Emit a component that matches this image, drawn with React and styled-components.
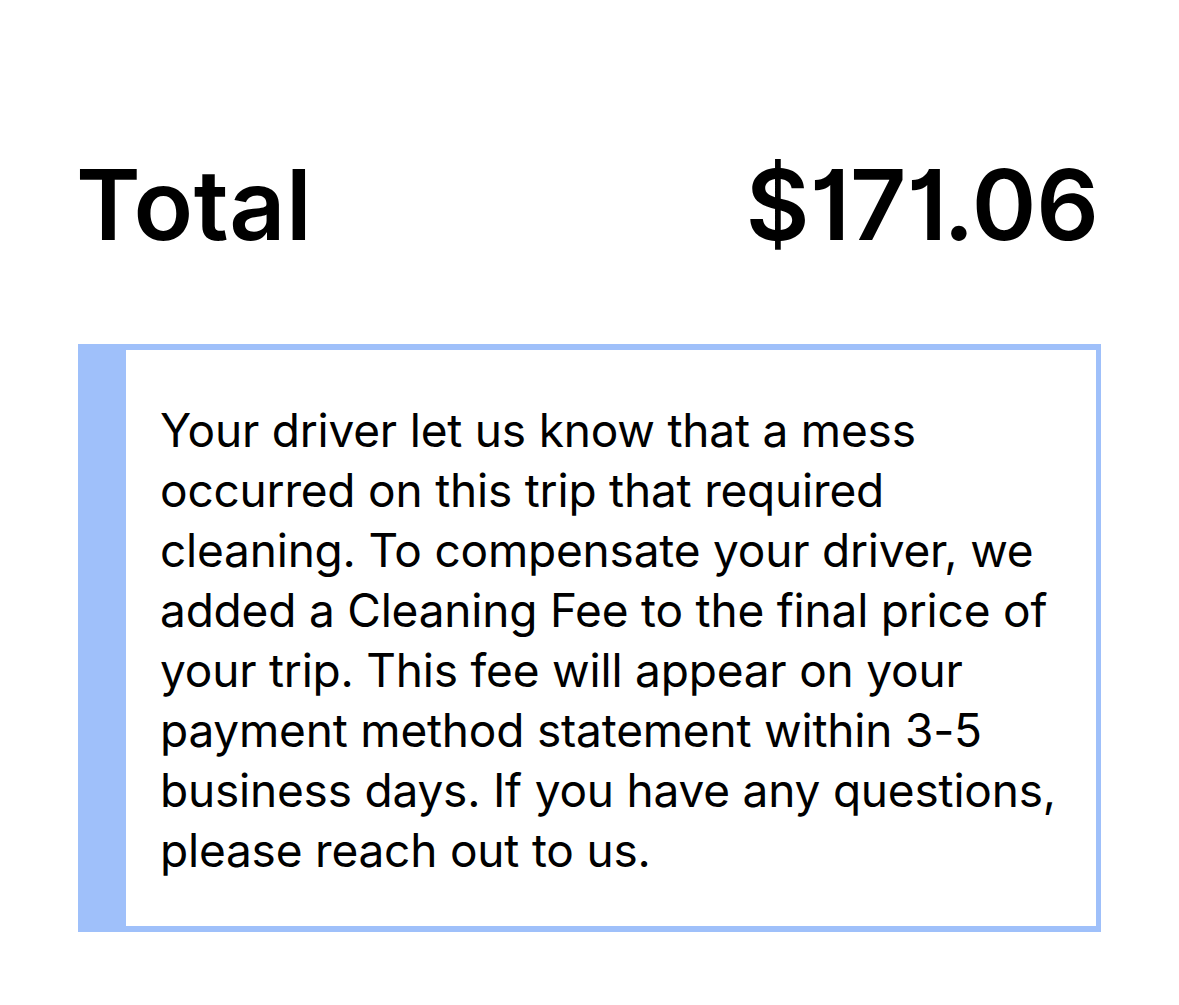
import React from 'react';
import styled, { createGlobalStyle } from 'styled-components';

const GlobalStyle = createGlobalStyle`
  html, body {
    margin: 0;
    padding: 0;
    background: #ffffff;
  }
  body {
    font-family: Inter, "Noto Sans", sans-serif;
    color: #000;
  }
`;

const Page = styled.div`
  width: 1179px;
  height: 1005px;
  box-sizing: border-box;
  padding: 148px 78px 0;
  display: flex;
  flex-direction: column;
  gap: 82px;
`;

const TotalRow = styled.div`
  display: flex;
  justify-content: space-between;
  align-items: baseline;
  padding: 0 2px 0 0;
  font-size: 98px;
  font-weight: 600;
  line-height: 114px;
  font-feature-settings: "cv01";
`;

const Label = styled.span`
  margin-left: -2px;
  letter-spacing: 0.5px;
`;

const Amount = styled.span`
  letter-spacing: 0;
`;

const Notice = styled.div`
  display: flex;
  border: 5px solid #9fc0fa;
  border-top-width: 6px;
  border-bottom-width: 6px;
  height: 588px;
  box-sizing: border-box;
`;

const Accent = styled.div`
  width: 43px;
  flex-shrink: 0;
  background: #9fc0fa;
`;

const Message = styled.p`
  margin: 0;
  padding: 50px 8px 0 34px;
  font-size: 46px;
  line-height: 60px;
  font-weight: 400;
  letter-spacing: -0.2px;
`;

export default function App() {
  return (
    <>
      <GlobalStyle />
      <Page>
        <TotalRow>
          <Label>Total</Label>
          <Amount>$171.06</Amount>
        </TotalRow>
        <Notice>
          <Accent />
          <Message>
            Your driver let us know that a mess occurred on this trip that required
            cleaning. To compensate your driver, we added a Cleaning Fee to the final
            price of your trip. This fee will appear on your payment method statement
            within 3-5 business days. If you have any questions, please reach out to us.
          </Message>
        </Notice>
      </Page>
    </>
  );
}
